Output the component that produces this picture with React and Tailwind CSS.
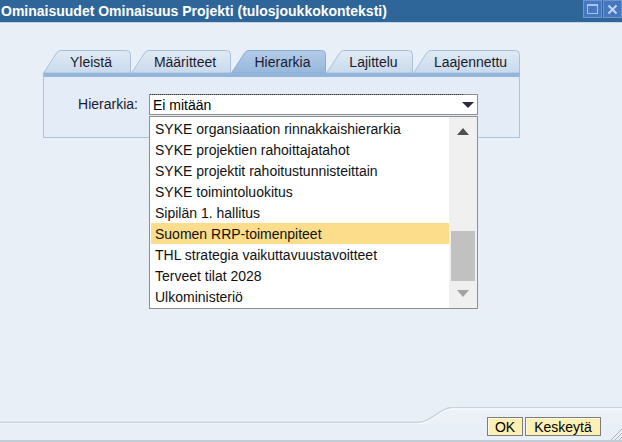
import React from "react";

const tabs = [
  { label: "Yleistä", w: 88 },
  { label: "Määritteet", w: 100 },
  { label: "Hierarkia", w: 95, active: true },
  { label: "Lajittelu", w: 87 },
  { label: "Laajennettu", w: 107 },
];

const items = [
  "SYKE organsiaation rinnakkaishierarkia",
  "SYKE projektien rahoittajatahot",
  "SYKE projektit rahoitustunnisteittain",
  "SYKE toimintoluokitus",
  "Sipilän 1. hallitus",
  "Suomen RRP-toimenpiteet",
  "THL strategia vaikuttavuustavoitteet",
  "Terveet tilat 2028",
  "Ulkoministeriö",
];

function Tab({ label, w, active, idx }) {
  const h = 23;
  const d = `M0.5,${h} L14,2.5 Q15.5,0.5 18,0.5 L${w - 4.5},0.5 Q${w - 0.5},0.5 ${w - 0.5},4.5 L${w - 0.5},${h} Z`;
  const gid = `tg${idx}`;
  return (
    <div className={`relative h-[23px] flex items-center justify-center pl-[8px] ${active ? "z-10" : ""}`} style={{ width: w }}>
      <svg className="absolute inset-0" width={w} height={h} viewBox={`0 0 ${w} ${h}`}>
        <defs>
          <linearGradient id={gid} x1="0" y1="0" x2="0" y2="1">
            {active ? (
              <>
                <stop offset="0" stopColor="#b4cce8" />
                <stop offset="1" stopColor="#96b7dc" />
              </>
            ) : (
              <>
                <stop offset="0" stopColor="#e0eaf5" />
                <stop offset="1" stopColor="#c8daed" />
              </>
            )}
          </linearGradient>
        </defs>
        <path d={d} fill={`url(#${gid})`} stroke={active ? "#8aabd2" : "#a9c0da"} strokeWidth="1" />
      </svg>
      <span className="relative text-[14px] text-[#1b1b2b] leading-none">{label}</span>
    </div>
  );
}

export default function App() {
  return (
    <div className="relative w-[622px] h-[442px] overflow-hidden flex flex-col bg-[#e8eff7] font-['Liberation_Sans',Arial,sans-serif]">
      {/* Title bar */}
      <div className="h-[22px] bg-[#2f6699] flex justify-between items-start shrink-0">
        <span className="text-white font-bold text-[14px] leading-[22px] pl-[1px]">
          Ominaisuudet Ominaisuus Projekti (tulosjoukkokonteksti)
        </span>
        <div className="flex gap-[1px] pr-0">
          <div className="w-[19px] h-[18px] bg-[#4777be] border border-[#6d95d0] flex items-center justify-center">
            <div className="w-[11px] h-[10px] border border-[#a9c4ee] border-t-2"></div>
          </div>
          <div className="w-[19px] h-[18px] bg-[#4777be] border border-[#6d95d0] flex items-center justify-center">
            <svg width="11" height="11" viewBox="0 0 11 11">
              <path d="M1.5,1.5 L9.5,9.5 M9.5,1.5 L1.5,9.5" stroke="#c3d6f3" strokeWidth="2" />
            </svg>
          </div>
        </div>
      </div>
      <div className="h-[1px] bg-[#c8d7e8] shrink-0"></div>

      {/* Body */}
      <div className="flex-1 pl-[43px] pt-[27px]">
        <div className="flex w-[477px]">
          {tabs.map((t, i) => (
            <Tab key={t.label} {...t} idx={i} />
          ))}
        </div>
        <div className="w-[477px] h-[65px] border-t-4 border-t-[#94b5da] border-x border-b border-[#a9c3e0] bg-[#e3ecf7]">
          <div className="flex items-center pt-[17px]">
            <div className="w-[94px] text-right text-[14px] text-[#1b1b2b]">Hierarkia:</div>
            <div className="ml-[11px] w-[329px] h-[21px] bg-white border border-[#8e8e8e] relative flex items-center">
              <div className="absolute left-0 top-[-1px] w-[313px] border-t border-dotted border-[#333]"></div>
              <span className="pl-[3px] text-[14px] text-black leading-none">Ei mitään</span>
              <svg className="absolute right-[3px] top-[7px]" width="12" height="6" viewBox="0 0 12 6">
                <path d="M0,0 L12,0 L6,6 Z" fill="#2a2a40" />
              </svg>
            </div>
          </div>
        </div>
      </div>

      {/* Footer */}
      <div className="relative h-[35px] shrink-0 flex justify-end items-start pt-[10px] pr-[21px] gap-[2px] border-b-2 border-[#c3ccd6]">
        <svg className="absolute left-0 top-0" width="622" height="17" viewBox="0 0 622 17">
          <path d="M0,16 L417,16 C432,16 440,1 452,1 L622,1 L622,17 L0,17 Z" fill="#ecf1f8" />
          <path d="M0,15.5 L417,15.5 C432,15.5 440,0.5 452,0.5 L622,0.5" fill="none" stroke="#c7d3e1" strokeWidth="1.5" />
          <path d="M0,17 L417,17 C432,17 440,2 452,2 L622,2" fill="none" stroke="#ffffff" strokeWidth="1" />
        </svg>
        <button className="relative h-[19px] w-[36px] bg-[#fdf0b4] border border-[#7d7d7d] shadow-[inset_1px_1px_0_#fffbe0] text-[14px] leading-none text-black flex items-center justify-center">
          OK
        </button>
        <button className="relative h-[19px] w-[76px] bg-[#fdf0b4] border border-[#7d7d7d] shadow-[inset_1px_1px_0_#fffbe0] text-[14px] leading-none text-black flex items-center justify-center">
          Keskeytä
        </button>
        <svg className="absolute right-0 bottom-0" width="14" height="14" viewBox="0 0 14 14">
          <path d="M3,14 L14,3 M7,14 L14,7 M11,14 L14,11" stroke="#a8b4c2" strokeWidth="1" />
        </svg>
      </div>

      {/* Dropdown list */}
      <div className="absolute left-[149px] top-[116px] w-[329px] h-[193px] bg-white border border-[#8e8e8e] flex">
        <div className="flex-1 pt-[1px] pl-[1px]">
          {items.map((it, i) => (
            <div
              key={it}
              className={`h-[21px] flex items-center pl-[4px] text-[14px] text-[#111] leading-none ${i === 5 ? "bg-[#fbdd8b]" : ""}`}
            >
              {it}
            </div>
          ))}
        </div>
        <div className="w-[28px] bg-[#f0f0f0] flex flex-col items-center">
          <svg className="mt-[11px]" width="12" height="7" viewBox="0 0 12 7">
            <path d="M0,7 L12,7 L6,0 Z" fill="#505050" />
          </svg>
          <div className="mt-[96px] w-[24px] h-[50px] bg-[#c1c1c1]"></div>
          <svg className="mt-[9px]" width="12" height="7" viewBox="0 0 12 7">
            <path d="M0,0 L12,0 L6,7 Z" fill="#a3a3a3" />
          </svg>
        </div>
      </div>
    </div>
  );
}
